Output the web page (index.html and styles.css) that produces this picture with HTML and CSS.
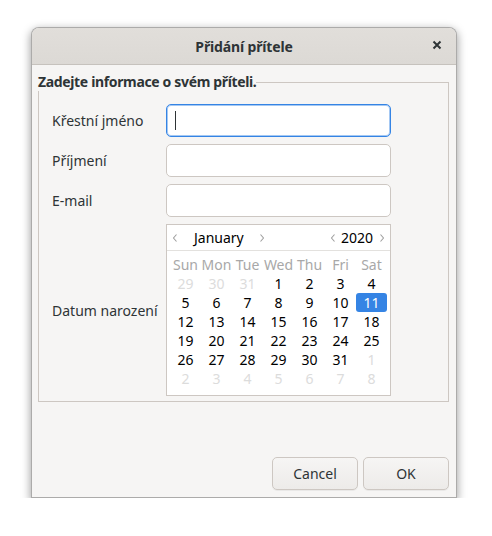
FILE: index.html
```html
<!DOCTYPE html>
<html lang="cs">
<head>
<meta charset="utf-8">
<title>Přidání přítele</title>
<link rel="stylesheet" href="styles.css">
</head>
<body>
<div class="window">
  <div class="titlebar">
    <span class="title">Přidání přítele</span>
    <span class="close">
      <svg width="10" height="10" viewBox="0 0 10 10"><path d="M1.5 1.5 L8.5 8.5 M8.5 1.5 L1.5 8.5" stroke="#2e3436" stroke-width="2" stroke-linecap="butt"/></svg>
    </span>
  </div>
  <div class="content">
    <fieldset class="frame">
      <legend class="frame-label">Zadejte informace o svém příteli.</legend>
      <div class="form">
        <label class="lbl">Křestní jméno</label>
        <div class="entry focused"><span class="cursor"></span></div>
        <label class="lbl">Příjmení</label>
        <div class="entry"></div>
        <label class="lbl">E-mail</label>
        <div class="entry"></div>
        <label class="lbl">Datum narození</label>
        <div class="calendar">
          <div class="cal-head">
            <div class="nav month">
              <svg class="arrow" width="6" height="10" viewBox="0 0 6 10"><path d="M4.5 1.5 L1.5 5 L4.5 8.5" fill="none" stroke="#a0a0a0" stroke-width="1.1"/></svg>
              <span class="nav-text">January</span>
              <svg class="arrow" width="6" height="10" viewBox="0 0 6 10"><path d="M1.5 1.5 L4.5 5 L1.5 8.5" fill="none" stroke="#a0a0a0" stroke-width="1.1"/></svg>
            </div>
            <div class="nav year">
              <svg class="arrow" width="6" height="10" viewBox="0 0 6 10"><path d="M4.5 1.5 L1.5 5 L4.5 8.5" fill="none" stroke="#a0a0a0" stroke-width="1.1"/></svg>
              <span class="nav-text">2020</span>
              <svg class="arrow" width="6" height="10" viewBox="0 0 6 10"><path d="M1.5 1.5 L4.5 5 L1.5 8.5" fill="none" stroke="#a0a0a0" stroke-width="1.1"/></svg>
            </div>
          </div>
          <div class="cal-grid">
            <span class="dn">Sun</span><span class="dn">Mon</span><span class="dn">Tue</span><span class="dn">Wed</span><span class="dn">Thu</span><span class="dn">Fri</span><span class="dn">Sat</span>
            <span class="d other">29</span><span class="d other">30</span><span class="d other">31</span><span class="d">1</span><span class="d">2</span><span class="d">3</span><span class="d">4</span>
            <span class="d">5</span><span class="d">6</span><span class="d">7</span><span class="d">8</span><span class="d">9</span><span class="d">10</span><span class="d sel">11</span>
            <span class="d">12</span><span class="d">13</span><span class="d">14</span><span class="d">15</span><span class="d">16</span><span class="d">17</span><span class="d">18</span>
            <span class="d">19</span><span class="d">20</span><span class="d">21</span><span class="d">22</span><span class="d">23</span><span class="d">24</span><span class="d">25</span>
            <span class="d">26</span><span class="d">27</span><span class="d">28</span><span class="d">29</span><span class="d">30</span><span class="d">31</span><span class="d other">1</span>
            <span class="d other">2</span><span class="d other">3</span><span class="d other">4</span><span class="d other">5</span><span class="d other">6</span><span class="d other">7</span><span class="d other">8</span>
          </div>
        </div>
      </div>
    </fieldset>
    <div class="actions">
      <button class="btn">Cancel</button>
      <button class="btn">OK</button>
    </div>
  </div>
</div>
</body>
</html>
```
FILE: styles.css
```css
html, body {
  margin: 0;
  padding: 0;
  background: #ffffff;
}
body {
  padding: 27px 0 0 31px;
  font-family: "Noto Sans", "Open Sans", sans-serif;
  font-size: 14px;
  color: #2e3436;
}
.window {
  width: 424px;
  height: 469px;
  border: 1px solid rgba(0, 0, 0, 0.3);
  border-radius: 8px 8px 0 0;
  background: #f6f5f4;
  box-shadow: 0 3px 9px 1px rgba(0, 0, 0, 0.35);
  display: flex;
  flex-direction: column;
  overflow: hidden;
}
.titlebar {
  height: 36px;
  flex: none;
  background: linear-gradient(#e1deda, #dcd9d5);
  border-bottom: 1px solid #c6c2bd;
  display: flex;
  align-items: center;
  justify-content: center;
  position: relative;
}
.title {
  font-weight: bold;
  font-size: 14px;
  color: #2e3436;
  letter-spacing: -0.15px;
}
.close {
  position: absolute;
  right: 14px;
  top: 12px;
  width: 10px;
  height: 10px;
  display: flex;
}
.content {
  flex: 1;
  display: flex;
  flex-direction: column;
  padding: 0 7px 7px 6px;
}
.frame {
  margin: 8px 0 0 0;
  padding: 0 0 5px 0;
  border: 1px solid #cdc7c2;
  min-width: 0;
}
.frame-label {
  padding: 0;
  margin-left: -1px;
  font-weight: bold;
  font-size: 14px;
  line-height: 18px;
  letter-spacing: -0.35px;
  color: #2e3436;
}
.form {
  display: grid;
  grid-template-columns: 102px 225px;
  column-gap: 12px;
  row-gap: 7px;
  padding: 13px 0 0 13px;
  align-items: center;
}
.lbl {
  color: #2e3436;
  font-size: 14px;
  white-space: nowrap;
}
.entry {
  height: 31px;
  border: 1px solid #cdc7c2;
  border-radius: 5px;
  background: #ffffff;
  display: flex;
  align-items: center;
  padding-left: 8px;
}
.entry.focused {
  border-color: #3584e4;
  box-shadow: inset 0 0 0 1px rgba(53, 132, 228, 0.45);
}
.cursor {
  width: 1px;
  height: 19px;
  background: #2e3436;
}
.calendar {
  height: 170px;
  border: 1px solid #cdc7c2;
  background: #ffffff;
  display: flex;
  flex-direction: column;
  font-size: 14px;
  color: #000000;
}
.cal-head {
  height: 25px;
  border-bottom: 1px solid #e3e1de;
  display: flex;
  justify-content: space-between;
  align-items: center;
  padding: 0 5px 0 5px;
}
.nav {
  display: flex;
  align-items: center;
}
.arrow {
  display: block;
}
.month .nav-text {
  margin: 0 15px 0 16px;
}
.year .nav-text {
  margin: 0 6px 0 5px;
}
.cal-grid {
  display: grid;
  grid-template-columns: repeat(7, 31px);
  grid-auto-rows: 19px;
  padding: 4px 3px 0 3px;
}
.dn, .d {
  display: flex;
  align-items: center;
  justify-content: center;
  line-height: 19px;
}
.dn {
  color: #a8a8a8;
}
.d.other {
  color: #dcdcdc;
}
.d.sel {
  background: #3584e4;
  color: #ffffff;
  border-radius: 3px;
}
.actions {
  margin-top: auto;
  display: flex;
  justify-content: flex-end;
  gap: 5px;
}
.btn {
  width: 86px;
  height: 33px;
  border: 1px solid #cdc7c2;
  border-radius: 5px;
  background: linear-gradient(#f6f5f4, #edebe9);
  font-family: "Noto Sans", "Open Sans", sans-serif;
  font-size: 14px;
  color: #2e3436;
  box-shadow: 0 1px rgba(0, 0, 0, 0.05);
}
```
